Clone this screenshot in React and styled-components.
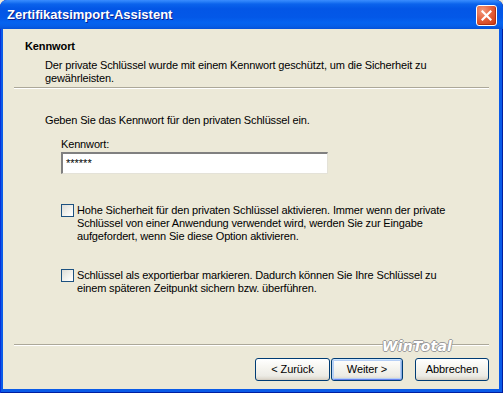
import React from "react"
import styled, { createGlobalStyle } from "styled-components"

const GlobalStyle = createGlobalStyle`
  html, body {
    margin: 0;
    padding: 0;
    background: #ece9d8;
  }
  body {
    font-family: "Liberation Sans", Arial, sans-serif;
    font-size: 11px;
    color: #000;
  }
`

const App = () => {
    return (
        <>
            <GlobalStyle />
            <Window>
                <TitleBar>
                    <Title>Zertifikatsimport-Assistent</Title>
                    <CloseButton>
                        <svg width="11" height="11" viewBox="0 0 11 11">
                            <path d="M1.5 1.5 L9.5 9.5 M9.5 1.5 L1.5 9.5" stroke="#fff" strokeWidth="2.2" strokeLinecap="square" />
                        </svg>
                    </CloseButton>
                </TitleBar>
                <Body>
                    <Header>
                        <HeaderTitle>Kennwort</HeaderTitle>
                        <HeaderText>
                            Der private Schlüssel wurde mit einem Kennwort geschützt, um die Sicherheit zu
                            <br />
                            gewährleisten.
                        </HeaderText>
                    </Header>
                    <Separator />
                    <Content>
                        <Text>Geben Sie das Kennwort für den privaten Schlüssel ein.</Text>
                        <Indent>
                            <Label>Kennwort:</Label>
                            <PasswordBox>******</PasswordBox>
                            <OptionRow top={30}>
                                <CheckBox />
                                <Text>
                                    Hohe Sicherheit für den privaten Schlüssel aktivieren. Immer wenn der private
                                    <br />
                                    Schlüssel von einer Anwendung verwendet wird, werden Sie zur Eingabe
                                    <br />
                                    aufgefordert, wenn Sie diese Option aktivieren.
                                </Text>
                            </OptionRow>
                            <OptionRow top={26}>
                                <CheckBox />
                                <Text>
                                    Schlüssel als exportierbar markieren. Dadurch können Sie Ihre Schlüssel zu
                                    <br />
                                    einem späteren Zeitpunkt sichern bzw. überführen.
                                </Text>
                            </OptionRow>
                        </Indent>
                    </Content>
                    <Footer>
                        <Separator />
                        <Watermark>WinTotal</Watermark>
                        <ButtonRow>
                            <Button width={75}>&lt; Zurück</Button>
                            <Button width={72} primary>Weiter &gt;</Button>
                            <Button width={74} gap={12}>Abbrechen</Button>
                        </ButtonRow>
                    </Footer>
                </Body>
            </Window>
        </>
    )
}

export default App

const Window = styled.div`
  width: 503px;
  height: 393px;
  display: flex;
  flex-direction: column;
  box-sizing: border-box;
  background: #0a5be8;
  border-radius: 7px 7px 0 0;
  box-shadow: inset 1px 0 0 #0831d9, inset -1px 0 0 #001ea0, inset 0 -1px 0 #001ea0;
  overflow: hidden;
`

const TitleBar = styled.div`
  height: 29px;
  flex: none;
  display: flex;
  align-items: center;
  padding: 0 6px 0 7px;
  background: linear-gradient(
    180deg,
    #3a8cff 0%,
    #2a80f8 5%,
    #0b63ec 14%,
    #0356e6 30%,
    #0358e8 60%,
    #0563f0 78%,
    #065ee8 90%,
    #0551d8 100%
  );
  border-radius: 7px 7px 0 0;
`

const Title = styled.div`
  flex: 1;
  font-family: "Liberation Sans", Arial, sans-serif;
  font-weight: bold;
  font-size: 13px;
  color: #fff;
  text-shadow: 1px 1px 0 #0a1e8c;
  padding-bottom: 1px;
`

const CloseButton = styled.div`
  width: 19px;
  height: 19px;
  display: flex;
  align-items: center;
  justify-content: center;
  border: 1px solid #fff;
  border-radius: 3px;
  background: radial-gradient(circle at 30% 25%, #f39a7c 0%, #e5623d 45%, #d2431e 80%, #c23a18 100%);
  box-shadow: inset -1px -1px 0 #b33012;
  margin-top: 1px;
`

const Body = styled.div`
  flex: 1;
  display: flex;
  flex-direction: column;
  margin: 0 4px 4px 3px;
  background: #ece9d8;
`

const Header = styled.div`
  padding: 11px 0 2px 22px;
`

const HeaderTitle = styled.div`
  font-weight: bold;
  line-height: 13px;
  letter-spacing: -0.1px;
`

const HeaderText = styled.div`
  margin: 6px 0 0 20px;
  line-height: 13px;
  letter-spacing: -0.15px;
`

const Separator = styled.div`
  height: 1px;
  margin: 0 10px 0 11px;
  background: #aca899;
  border-bottom: 1px solid #fff;
`

const Content = styled.div`
  padding: 25px 0 0 42px;
`

const Text = styled.div`
  line-height: 13px;
  letter-spacing: -0.15px;
`

const Indent = styled.div`
  margin-left: 16px;
  padding-top: 11px;
`

const Label = styled(Text)``

const PasswordBox = styled.div`
  width: 267px;
  height: 22px;
  box-sizing: border-box;
  margin-top: 1px;
  padding: 3px 0 0 3px;
  background: #fff;
  border-top: 2px solid #808080;
  border-left: 2px solid #808080;
  border-right: 1px solid #e4e2d8;
  border-bottom: 1px solid #e4e2d8;
  font-size: 11px;
  letter-spacing: 0px;
  line-height: 13px;
`

const OptionRow = styled.div`
  display: flex;
  align-items: flex-start;
  gap: 3px;
  margin-top: ${p => p.top}px;
`

const CheckBox = styled.div`
  flex: none;
  width: 13px;
  height: 13px;
  box-sizing: border-box;
  border: 1px solid #1c5180;
  background: linear-gradient(135deg, #dcdcd7 0%, #eeeee9 45%, #fbfbf9 80%, #fff 100%);
`

const Footer = styled.div`
  position: relative;
  margin-top: auto;
  padding-bottom: 8px;
`

const Watermark = styled.div`
  position: absolute;
  left: 379px;
  top: -6px;
  font-family: "DejaVu Sans", sans-serif;
  font-style: italic;
  font-weight: bold;
  font-size: 14px;
  letter-spacing: 0.2px;
  color: #fff;
  text-shadow: -1px 0 0 #9a9a9a, 1px 0 0 #9a9a9a, 0 -1px 0 #9a9a9a, 0 1px 0 #9a9a9a;
`

const ButtonRow = styled.div`
  display: flex;
  justify-content: flex-end;
  padding: 12px 10px 0 0;
`

const Button = styled.div`
  width: ${p => p.width}px;
  height: 23px;
  box-sizing: border-box;
  margin-left: ${p => (p.gap !== undefined ? p.gap : 1)}px;
  display: flex;
  align-items: center;
  justify-content: center;
  border: 1px solid #003c74;
  border-radius: 3px;
  background: linear-gradient(180deg, #ffffff 0%, #f6f5f0 40%, #ecebe5 80%, #d8d2c6 100%);
  box-shadow: ${p =>
        p.primary
            ? "inset 0 1px 0 #cee7ff, inset 1px 0 0 #bcd4f6, inset -1px 0 0 #89ade4, inset 0 -1px 0 #6982ee, inset 0 0 0 2px #b6cff5"
            : "inset 0 -1px 0 #d6d0c5"};
  padding-bottom: 1px;
  letter-spacing: -0.1px;
`
